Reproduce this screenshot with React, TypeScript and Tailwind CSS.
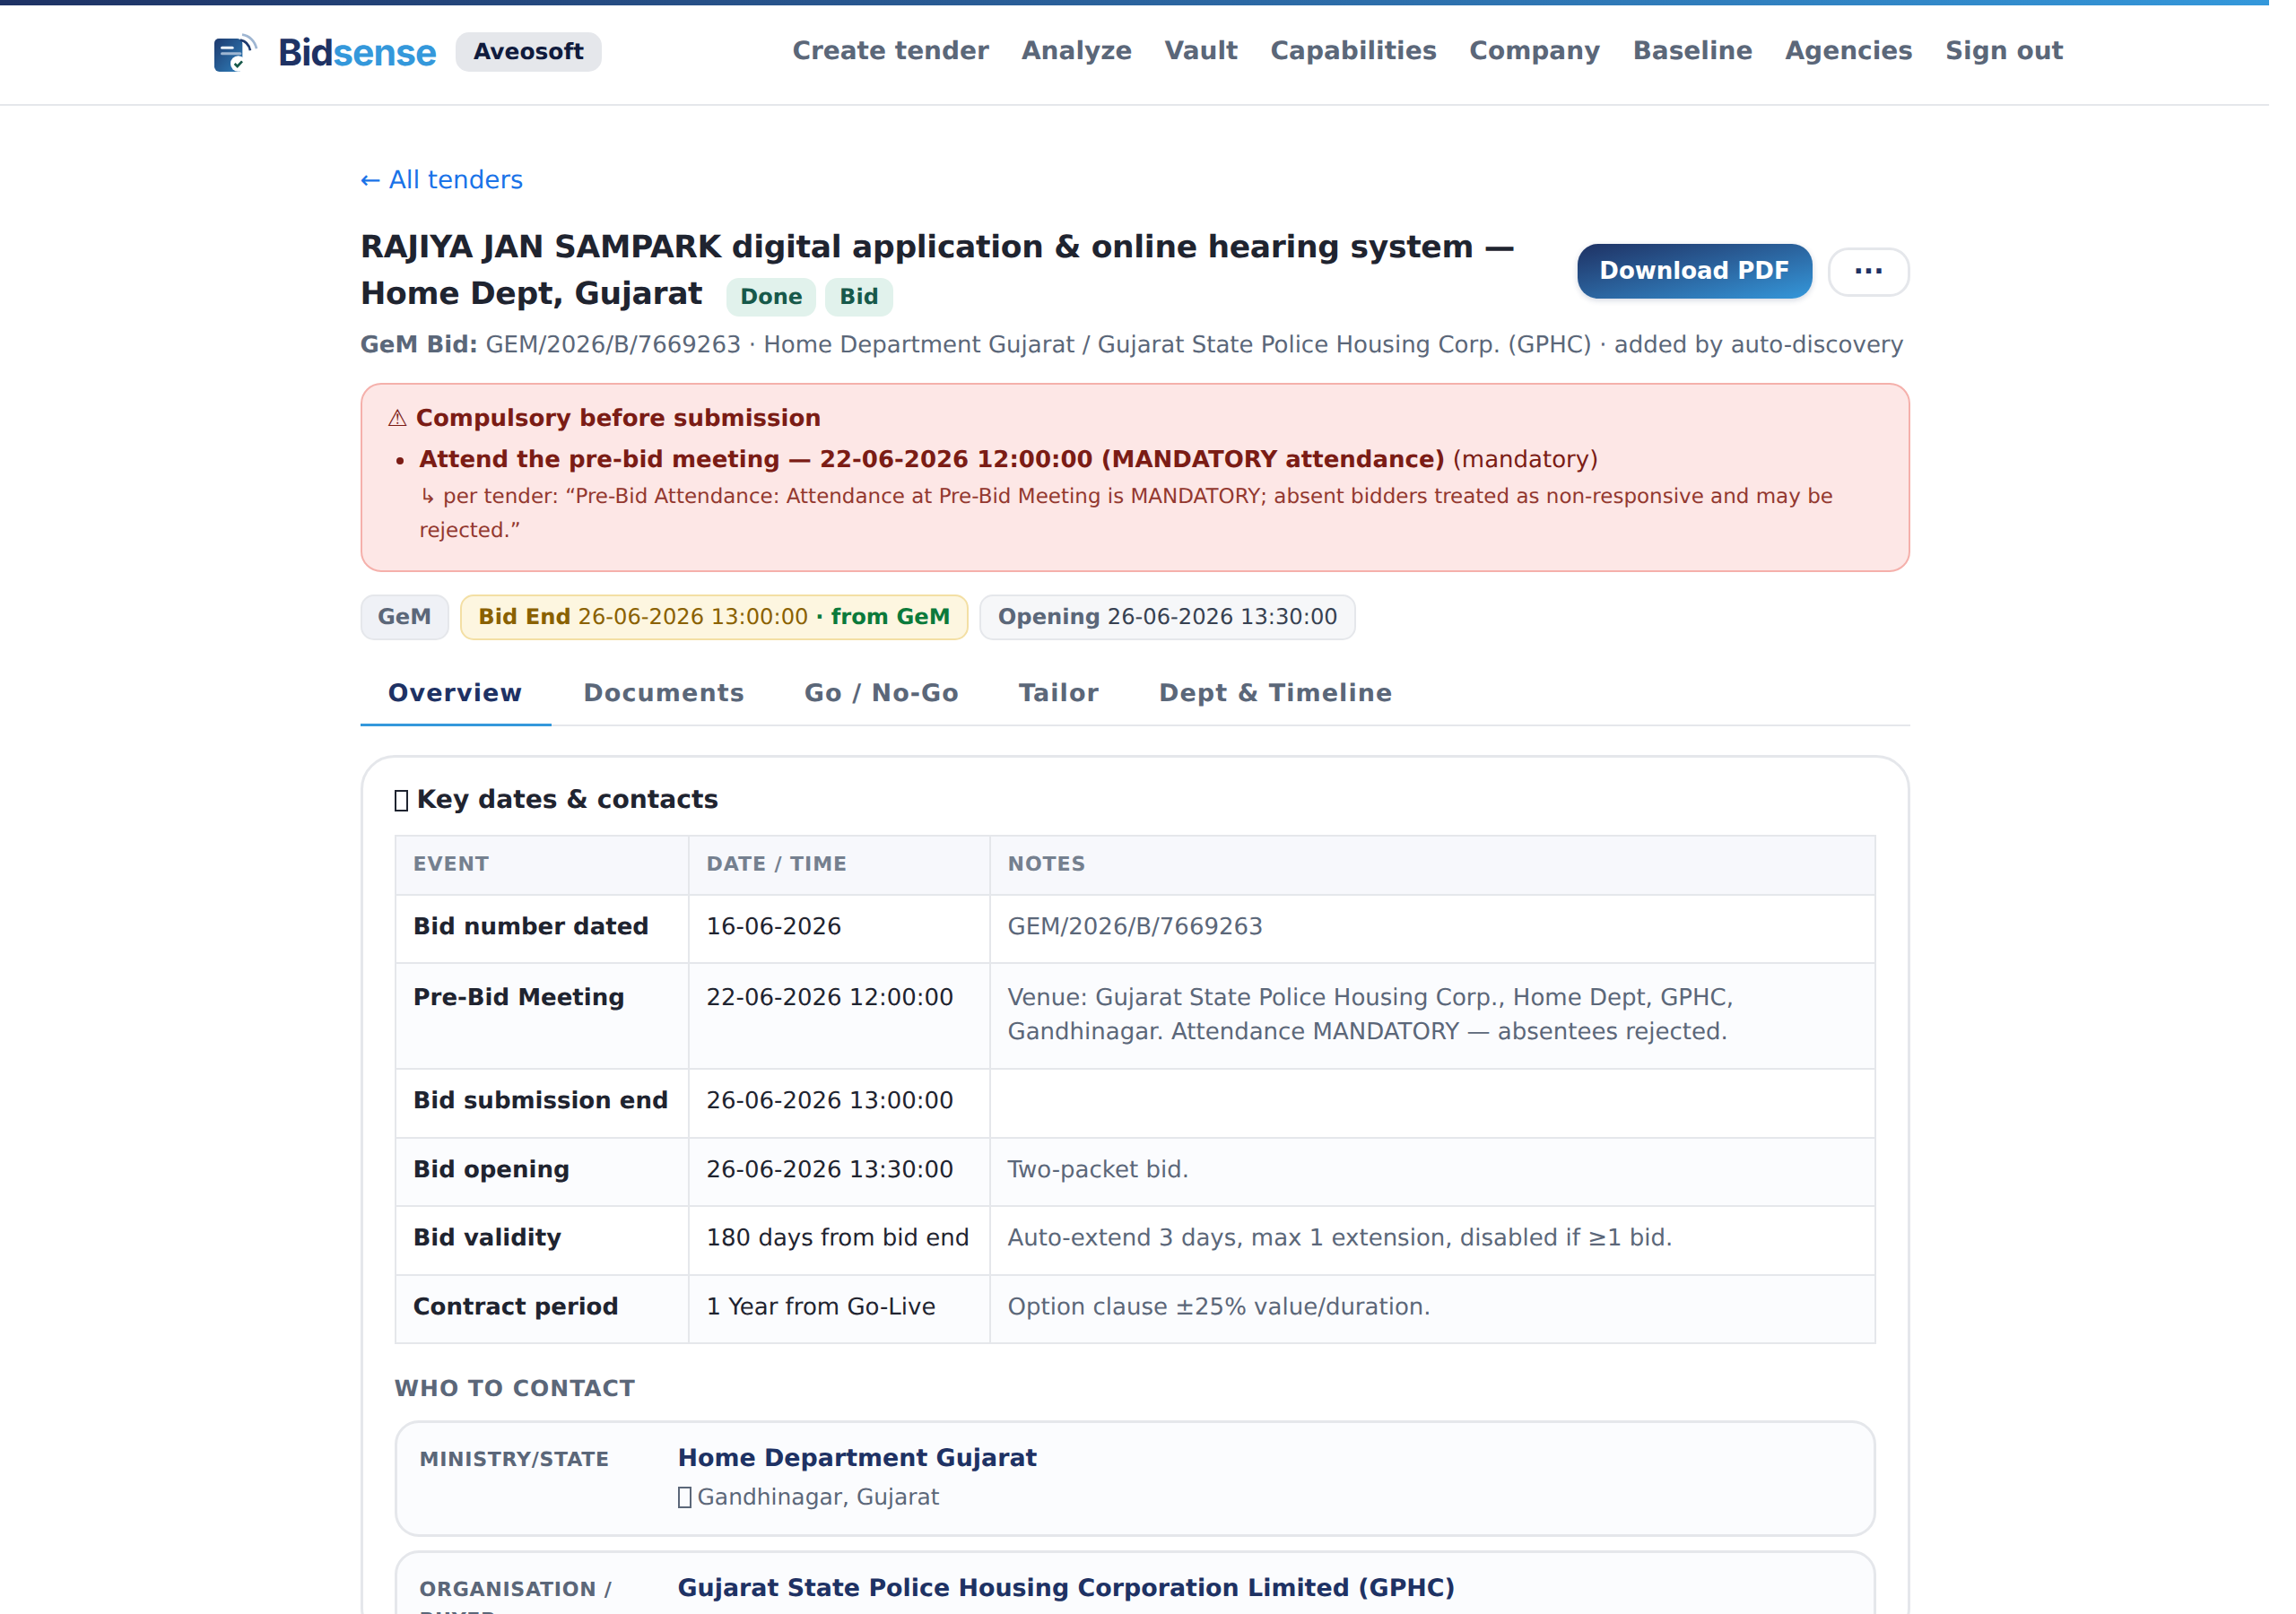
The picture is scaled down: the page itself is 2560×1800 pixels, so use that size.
const navLinks = ["Create tender", "Analyze", "Vault", "Capabilities", "Company", "Baseline", "Agencies", "Sign out"];
const tabs = ["Overview", "Documents", "Go / No-Go", "Tailor", "Dept & Timeline"];

const rows = [
  { event: "Bid number dated", date: "16-06-2026", notes: "GEM/2026/B/7669263" },
  {
    event: "Pre-Bid Meeting",
    date: "22-06-2026 12:00:00",
    notes: "Venue: Gujarat State Police Housing Corp., Home Dept, GPHC, Gandhinagar. Attendance MANDATORY — absentees rejected.",
  },
  { event: "Bid submission end", date: "26-06-2026 13:00:00", notes: "" },
  { event: "Bid opening", date: "26-06-2026 13:30:00", notes: "Two-packet bid." },
  { event: "Bid validity", date: "180 days from bid end", notes: "Auto-extend 3 days, max 1 extension, disabled if ≥1 bid." },
  { event: "Contract period", date: "1 Year from Go-Live", notes: "Option clause ±25% value/duration." },
];

function Logo() {
  return (
    <svg width="50" height="44" viewBox="0 0 150 132" fill="none">
      <defs>
        <linearGradient id="logoFill" x1="0" y1="0" x2="1" y2="1">
          <stop offset="0" stopColor="#1e3a6e" />
          <stop offset="1" stopColor="#2f7fbb" />
        </linearGradient>
      </defs>
      <path d="M18 21h62a17 17 0 0 1 17 17v78a16 16 0 0 1-16 16H20a17 17 0 0 1-17-17V36a15 15 0 0 1 15-15z" fill="url(#logoFill)" />
      <rect x="24" y="47" width="44" height="9" rx="4.5" fill="#eef3f9" />
      <rect x="24" y="67" width="70" height="9" rx="4.5" fill="#9fb6d2" />
      <circle cx="83" cy="105" r="26" fill="#ffffff" />
      <path d="M71 105l9 9 16-17" stroke="#17594a" strokeWidth="8" fill="none" />
      <path d="M90 26c16 3 29 15 33 35" stroke="#1e3a6e" strokeWidth="8" fill="none" />
      <path d="M96 8c24 3 43 22 48 47" stroke="#9fb6d2" strokeWidth="8" fill="none" />
    </svg>
  );
}

// the emoji falls back to an empty box in the reference
function MissingGlyph({ className }: { className: string }) {
  return <span className={`relative top-[4px] inline-block h-[24px] w-[15px] border-2 ${className}`} />;
}

export default function App() {
  return (
    <div className="h-[1800px] w-[2530px] overflow-hidden bg-white font-['DejaVu_Sans',sans-serif] text-[#1f2430] [text-rendering:geometricPrecision]">
      <div className="h-[6px] bg-gradient-to-r from-[#1e3264] to-[#3498db]" />
      <header className="h-[112px] border-b-2 border-[#e5e7eb]">
        <div className="mx-auto flex h-[104px] w-[2112px] items-center justify-between pl-[29px] pr-[20px]">
          <div className="flex items-center">
            <Logo />
            <span className="ml-[22px] font-['Inter',sans-serif] text-[41px] leading-none font-bold tracking-[-1px]">
              <span className="text-[#1e3264]">Bid</span>
              <span className="text-[#3498db]">sense</span>
            </span>
            <span className="ml-[22px] rounded-[15px] bg-[#e5e7eb] px-[19.5px] py-[6px] text-[24.9px] leading-[32px] font-bold text-[#101b3d]">
              Aveosoft
            </span>
          </div>
          <nav className="-mt-[3px] flex gap-[36px]">
            {navLinks.map((link) => (
              <a key={link} className="text-[28px] leading-[40px] font-bold text-[#5b6779]">
                {link}
              </a>
            ))}
          </nav>
        </div>
      </header>

      <main className="mx-auto w-[1729px] pt-[63px] pl-[1px]">
        <a className="block text-[27.84px] leading-[40px] text-[#1a73e8]">← All tenders</a>

        <div className="mt-[29px] flex items-center justify-between">
          <h1 className="w-[1340px] text-[34.56px] leading-[52px] font-bold tracking-[-0.32px] text-[#1f2430]">
            RAJIYA JAN SAMPARK digital application &amp; online hearing system — Home Dept, Gujarat
            <span className="relative ml-[27px] inline-block rounded-[14px] bg-[#e1f2ec] px-[15px] text-[24px] leading-[43px] tracking-normal text-[#17594a]">
              Done
            </span>
            <span className="relative ml-[10px] inline-block rounded-[14px] bg-[#e1f2ec] px-[16px] text-[24px] leading-[43px] tracking-normal text-[#17594a]">
              Bid
            </span>
          </h1>
          <div className="flex items-center gap-[17px]">
            <button className="h-[61px] w-[262px] rounded-[23px] bg-gradient-to-br from-[#1e3264] to-[#3498db] text-[26px] font-bold text-white shadow-[0_2px_6px_rgba(30,50,100,0.2)]">
              Download PDF
            </button>
            <button className="mt-[2px] h-[55px] w-[92px] rounded-[23px] border-[3px] border-[#e5e7eb] bg-white text-[30px] leading-none font-bold text-[#1e3264]">
              ···
            </button>
          </div>
        </div>

        <p className="mt-[11px] text-[26px] leading-[40px] text-[#5b6779]">
          <b>GeM Bid:</b> GEM/2026/B/7669263 · Home Department Gujarat / Gujarat State Police Housing Corp. (GPHC) · added by auto-discovery
        </p>

        <section className="mt-[22px] h-[211px] rounded-[23px] border-2 border-[#f5b0ab] bg-[#fde7e6] pt-[18px] pl-[28px] pr-[40px]">
          <div className="text-[26px] leading-[40px] font-bold text-[#7b1c15]">
            <span className="font-normal">⚠</span> Compulsory before submission
          </div>
          <div className="mt-[6px] flex">
            <span className="mr-[12px] ml-[10px] mt-[17px] h-[8px] w-[8px] shrink-0 rounded-full bg-[#7b1c15]" />
            <div className="ml-[6px]">
              <div className="text-[26px] leading-[40px] text-[#7b1c15]">
                <b>Attend the pre-bid meeting — 22-06-2026 12:00:00 (MANDATORY attendance)</b> (mandatory)
              </div>
              <div className="mt-[2px] text-[23px] leading-[38px] text-[#93382f]">
                ↳ per tender: “Pre-Bid Attendance: Attendance at Pre-Bid Meeting is MANDATORY; absent bidders treated as non-responsive and may be rejected.”
              </div>
            </div>
          </div>
        </section>

        <div className="mt-[25px] flex gap-[12px] text-[24.2px] leading-[47px]">
          <span className="rounded-[15px] border-2 border-[#e5e7eb] bg-[#eff1f6] px-[17.5px] font-bold text-[#5b6779]">GeM</span>
          <span className="rounded-[15px] border-2 border-[#f3dfa4] bg-[#fdf6e0] px-[18.5px] text-[#8a6100]">
            <b>Bid End</b> 26-06-2026 13:00:00 <b className="text-[#0b7a3b]">· from GeM</b>
          </span>
          <span className="rounded-[15px] border-2 border-[#e5e7eb] bg-[#f6f7f9] px-[18.5px] text-[#374151]">
            <b className="text-[#5b6779]">Opening</b> 26-06-2026 13:30:00
          </span>
        </div>

        <div className="mt-[18px] flex h-[78px] border-b-2 border-[#e5e7eb]">
          {tabs.map((tab, i) => (
            <div
              key={tab}
              className={
                i === 0
                  ? "mr-[4px] h-[78px] border-b-[3px] border-[#3498db] pt-[22px] pr-[32px] pl-[31px] text-[27px] leading-[40px] font-bold tracking-[1.07px] text-[#1e3264]"
                  : "mr-[4px] px-[31px] pt-[22px] text-[27px] leading-[40px] font-bold tracking-[1.07px] text-[#5b6779]"
              }
            >
              {tab}
            </div>
          ))}
        </div>

        <section className="mt-[32px] rounded-[38px] border-[3px] border-[#e5e7eb] bg-white px-[35px] pt-[26px]">
          <h2 className="text-[28.16px] leading-[42px] font-bold text-[#1f2430]">
            <MissingGlyph className="mr-[10px] border-[#1f2430]" />
            Key dates &amp; contacts
          </h2>
          <table className="mt-[17.5px] w-[1652px] table-fixed border-collapse text-[26px] leading-[37.6px]">
            <colgroup>
              <col className="w-[327px]" />
              <col className="w-[336px]" />
              <col />
            </colgroup>
            <thead>
              <tr className="bg-[#f7f8fc]">
                {["Event", "Date / Time", "Notes"].map((h) => (
                  <th key={h} className="h-[66px] border-2 border-[#e5e7eb] px-[19px] text-left text-[22.08px] font-bold tracking-[0.9px] text-[#75808f] uppercase">
                    {h}
                  </th>
                ))}
              </tr>
            </thead>
            <tbody>
              {rows.map((r, i) => (
                <tr key={r.event} className={i === 1 ? "h-[118px] bg-[#fbfcfe] [&>td]:pt-[20px]" : "even:bg-[#fbfcfe] [&>td]:pt-[17px]"}>
                  <td className="border-2 border-[#e5e7eb] px-[19px] pb-[20px] align-top font-bold">{r.event}</td>
                  <td className="border-2 border-[#e5e7eb] px-[19px] pb-[20px] align-top">{r.date}</td>
                  <td className="border-2 border-[#e5e7eb] px-[19px] pb-[20px] align-top text-[#5b6779]">{r.notes}</td>
                </tr>
              ))}
            </tbody>
          </table>

          <h3 className="mt-[31px] text-[24.96px] leading-[38px] font-bold tracking-[1px] text-[#5b6779] uppercase">Who to contact</h3>

          <div className="mt-[16px] flex h-[130px] w-[1652px] rounded-[27px] border-[3px] border-[#e5e7eb] bg-[#fbfcfe] pt-[20px] pl-[25px]">
            <div className="w-[288px] pt-[5px] text-[22.08px] leading-[34px] font-bold tracking-[0.7px] text-[#5b6779]">MINISTRY/STATE</div>
            <div>
              <div className="text-[26.88px] leading-[40px] font-bold text-[#1e3264]">Home Department Gujarat</div>
              <div className="mt-[3.5px] text-[24.96px] leading-[38px] text-[#5b6779]">
                <MissingGlyph className="mr-[7px] border-[#5b6779]" />
                Gandhinagar, Gujarat
              </div>
            </div>
          </div>
          <div className="mt-[15px] flex w-[1652px] rounded-[27px] border-[3px] border-[#e5e7eb] bg-[#fbfcfe] pt-[20px] pl-[25px]">
            <div className="mr-[48px] w-[240px] pt-[5px] text-[22.08px] leading-[34px] font-bold tracking-[0.7px] text-[#5b6779]">ORGANISATION / BUYER</div>
            <div className="text-[26.88px] leading-[40px] font-bold text-[#1e3264]">Gujarat State Police Housing Corporation Limited (GPHC)</div>
          </div>
        </section>
      </main>
    </div>
  );
}
